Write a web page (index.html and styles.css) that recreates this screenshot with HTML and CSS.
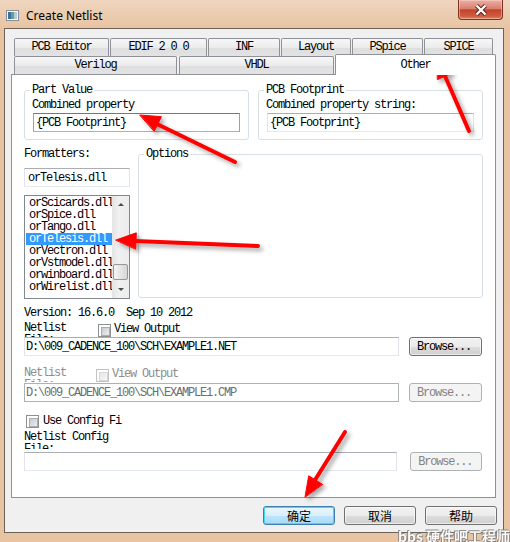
FILE: index.html
```html
<!DOCTYPE html>
<html lang="zh">
<head>
	<meta charset="UTF-8">
	<title>Create Netlist</title>
	<link rel="stylesheet" href="styles.css">
</head>
<body>
	<div class="window">
		<div class="titlebar">
			<svg class="app-icon" width="13" height="11" viewBox="0 0 13 11">
				<rect x="0.5" y="0.5" width="12" height="10" fill="#f4f6f8" stroke="#8c9096"/>
				<rect x="2" y="2" width="3" height="7" fill="#3f6f9e"/>
				<rect x="5" y="2" width="3" height="7" fill="#5aa58c"/>
				<rect x="8" y="2" width="3" height="7" fill="#b9cad8"/>
			</svg>
			<span class="title">Create Netlist</span>
			<div class="close">
				<svg width="14" height="12" viewBox="0 0 14 12">
					<path d="M2.5 1.5 L11.5 10.5 M11.5 1.5 L2.5 10.5" stroke="#5a2016" stroke-width="4.2"/>
					<path d="M2.5 1.5 L11.5 10.5 M11.5 1.5 L2.5 10.5" stroke="#fff" stroke-width="2.4"/>
				</svg>
			</div>
		</div>

		<div class="client">
			<div class="tabs">
				<div class="tab-row">
					<div class="tab w95">PCB Editor</div>
					<div class="tab w97">EDIF 2 0 0</div>
					<div class="tab w72">INF</div>
					<div class="tab w70">Layout</div>
					<div class="tab w71">PSpice</div>
					<div class="tab w69">SPICE</div>
				</div>
				<div class="tab-row">
					<div class="tab w163">Verilog</div>
					<div class="tab w155">VHDL</div>
					<div class="tab w161 selected">Other</div>
				</div>
			</div>

			<div class="panel">
				<div class="top-row">
					<fieldset class="group">
						<legend>Part Value</legend>
						<div class="label">Combined property</div>
						<input class="edit focus" type="text" value="{PCB Footprint}">
					</fieldset>
					<fieldset class="group">
						<legend>PCB Footprint</legend>
						<div class="label">Combined property string:</div>
						<input class="edit" type="text" value="{PCB Footprint}">
					</fieldset>
				</div>

				<div class="mid-row">
					<div class="formatters">
						<div class="label">Formatters:</div>
						<input class="edit small" type="text" value="orTelesis.dll">
						<div class="listbox">
							<ul class="items">
								<li>orScicards.dll</li>
								<li>orSpice.dll</li>
								<li>orTango.dll</li>
								<li class="sel">orTelesis.dll</li>
								<li>orVectron.dll</li>
								<li>orVstmodel.dll</li>
								<li>orwinboard.dll</li>
								<li>orWirelist.dll</li>
							</ul>
							<div class="scrollbar">
								<div class="sb-btn up"></div>
								<div class="sb-track"><div class="sb-thumb"></div></div>
								<div class="sb-btn down"></div>
							</div>
						</div>
					</div>
					<fieldset class="group options">
						<legend>Options</legend>
					</fieldset>
				</div>

				<div class="version">Version: 16.6.0  Sep 10 2012</div>

				<div class="file-head">
					<div class="file-label w74">Netlist<br>File:</div>
					<span class="check"></span>
					<span class="check-text">View Output</span>
				</div>
				<div class="file-row">
					<input class="edit path" type="text" value="D:\009_CADENCE_100\SCH\EXAMPLE1.NET">
					<button class="btn browse">Browse...</button>
				</div>

				<div class="file-head disabled second">
					<div class="file-label w72">Netlist<br>File:</div>
					<span class="check"></span>
					<span class="check-text">View Output</span>
				</div>
				<div class="file-row second">
					<input class="edit path" type="text" value="D:\009_CADENCE_100\SCH\EXAMPLE1.CMP" disabled>
					<button class="btn browse" disabled>Browse...</button>
				</div>

				<div class="config-check">
					<span class="check"></span>
					<span class="check-text">Use Config Fi</span>
				</div>
				<div class="config-label">Netlist Config<br>File:</div>
				<div class="file-row">
					<input class="edit path" type="text" value="">
					<button class="btn browse far" disabled>Browse...</button>
				</div>
			</div>

			<div class="buttons">
				<button class="btn cjk default">确定</button>
				<button class="btn cjk">取消</button>
				<button class="btn cjk">帮助</button>
			</div>
		</div>

		<div class="watermark">bbs 硬件吧工程师</div>

		<svg class="arrows" width="510" height="542" viewBox="0 0 510 542">
			<defs>
				<filter id="shadow" x="-20%" y="-20%" width="140%" height="140%">
					<feDropShadow dx="3" dy="3" stdDeviation="2" flood-color="#000" flood-opacity="0.35"/>
				</filter>
			</defs>
			<g filter="url(#shadow)" fill="#ff0000" stroke="#ff0000" stroke-linecap="round">
				<line x1="235" y1="162" x2="157" y2="124" stroke-width="4"/>
				<polygon points="140,115 161.4,116.7 154.4,131.1" stroke-width="1"/>
				<line x1="469" y1="131" x2="445" y2="76" stroke-width="4"/>
				<polygon points="437,58 452.3,73.1 437.7,79.5" stroke-width="1"/>
				<line x1="258" y1="246" x2="135" y2="241" stroke-width="4"/>
				<polygon points="116,240 136.3,232.8 135.7,248.8" stroke-width="1"/>
				<line x1="345" y1="432" x2="315" y2="480" stroke-width="4"/>
				<polygon points="305,497 308.7,475.8 322.3,484.2" stroke-width="1"/>
			</g>
		</svg>
	</div>
</body>
</html>
```

FILE: styles.css
```css
*{margin:0;padding:0;box-sizing:border-box;}
body{
	background:#e8c5a4;
	overflow:hidden;
	font-family:"Liberation Mono",monospace;
	font-size:12px;
	letter-spacing:-1.2px;
	color:#000;
}
.window{
	position:relative;
	width:510px;
	height:542px;
	padding:0 6px 9px 4px;
	display:flex;
	flex-direction:column;
	background:linear-gradient(#efd6bf,#e7c3a1 30px,#e8c4a3);
}

/* title bar */
.titlebar{
	height:28px;
	display:flex;
	align-items:center;
	flex:none;
}
.app-icon{margin-left:2px;margin-top:2px;}
.title{
	margin-left:7px;
	margin-top:2px;
	font-family:"Noto Sans","Open Sans",sans-serif;
	font-size:12px;
	letter-spacing:0;
	color:#000;
	flex:1;
}
.close{
	align-self:flex-start;
	margin-right:1px;
	width:45px;
	height:20px;
	display:flex;
	align-items:center;
	justify-content:center;
	border:1px solid #7d3225;
	border-top:none;
	border-radius:0 0 4px 4px;
	background:linear-gradient(#eab0a4,#d9806f 45%,#c2442c 52%,#cf5c3f 85%,#de8a6a);
	box-shadow:inset 0 0 0 1px rgba(255,220,210,.45);
}

/* client area */
.client{
	flex:1;
	border:1px solid #6c625a;
	background:#f0f0f0;
	display:flex;
	flex-direction:column;
}
.tabs{
	padding:9px 0 0 9px;
}
.tab-row{
	display:flex;
	height:18px;
}
.tab{
	height:18px;
	margin-right:1px;
	border:1px solid #8e9197;
	border-bottom:none;
	border-radius:2px 2px 0 0;
	background:linear-gradient(#f7f7f7,#ebebeb 50%,#dedede 52%,#e3e3e3);
	text-align:center;
	line-height:16px;
	white-space:pre;
}
.w95{width:95px;}
.w97{width:97px;}
.w72{width:72px;}
.w70{width:70px;}
.w71{width:71px;}
.w69{width:69px;}
.w163{width:163px;margin-right:2px;}
.w155{width:155px;}
.w161{width:161px;}
.tab.selected{
	position:relative;
	z-index:2;
	height:21px;
	margin-top:-2px;
	background:#fff;
	line-height:20px;
}

.panel{
	margin-left:6px;
	width:485px;
	height:424px;
	border:1px solid #8e9197;
	background:#fff;
	padding:9px 0 0 12px;
}
.label{
	line-height:12px;
	height:12px;
	white-space:pre;
}

/* group boxes */
.group{
	border:1px solid #d5dfe5;
	border-radius:3px;
	min-width:0;
}
.group legend{
	line-height:12px;
	padding:0 2px;
	margin-left:-3px;
}
.top-row{
	display:flex;
	gap:9px;
	width:459px;
}
.top-row .group{
	width:225px;
	padding:3px 8px 7px;
}
.top-row .label{margin-left:-1px;}

/* text boxes */
.edit{
	display:block;
	width:100%;
	height:19px;
	margin-top:2px;
	padding:0 2px;
	font:inherit;
	letter-spacing:-1.2px;
	color:#000;
	background:#fff;
	border:1px solid;
	border-color:#abadb3 #e2e3ea #e3e9ef;
	outline:none;
}
.edit.focus{border-color:#5e7d9a #8ea4b9 #9fb4c6;}
.edit:disabled{
	color:#6d6d6d;
	border-color:#adb2b5;
	background:#fff;
}

.mid-row{
	display:flex;
	gap:8px;
	margin-top:8px;
	width:459px;
}
.formatters{width:106px;}
.edit.small{margin-top:8px;padding-left:3px;}
.options{
	flex:1;
	height:150px;
	padding:0 8px;
}

/* list box */
.listbox{
	margin-top:8px;
	height:104px;
	border:1px solid #828790;
	background:#fff;
	display:flex;
}
.items{
	list-style:none;
	flex:1;
	overflow:hidden;
	padding:1px 0 0 1px;
}
.items li{
	height:12px;
	line-height:12px;
	padding-left:3px;
	white-space:pre;
}
.items li.sel{
	background:#3399ff;
	color:#fff;
}
.scrollbar{
	width:17px;
	display:flex;
	flex-direction:column;
	background:linear-gradient(90deg,#e4e4e4,#f0f0f0 40%,#ececec);
}
.sb-btn{
	height:17px;
	display:flex;
	align-items:center;
	justify-content:center;
}
.sb-btn::before{
	content:"";
	border-left:3px solid transparent;
	border-right:3px solid transparent;
}
.sb-btn.up::before{border-bottom:3px solid #4d4d4d;}
.sb-btn.down::before{border-top:3px solid #4d4d4d;}
.sb-track{
	flex:1;
	display:flex;
	flex-direction:column;
	justify-content:flex-end;
	padding:0 1px 1px;
}
.sb-thumb{
	height:16px;
	border:1px solid #979797;
	border-radius:2px;
	background:linear-gradient(90deg,#f4f4f4,#e6e6e6 50%,#d6d6d6);
}

.version{
	margin-top:8px;
	line-height:12px;
	white-space:pre;
}

/* file rows */
.file-head{
	display:flex;
	align-items:flex-start;
	height:16px;
	margin-top:2px;
}
.file-head.second{margin-top:10px;}
.file-label{
	height:16px;
	line-height:12px;
	padding-top:1px;
	overflow:hidden;
}
.file-label.w74{width:74px;}
.file-label.w72{width:72px;}
.check{
	width:13px;
	height:13px;
	margin-top:3px;
	border:1px solid #8e8f8f;
	background:#fff;
	padding:2px;
	flex:none;
}
.check::before{
	content:"";
	display:block;
	width:7px;
	height:7px;
	border:1px solid #a9adb2;
	background:linear-gradient(135deg,#c7cbd0,#eceef0);
}
.check-text{
	margin-left:3px;
	margin-top:2px;
	line-height:12px;
}
.disabled{color:#8d8d8d;}
.disabled .check{border-color:#c2c2c2;}
.disabled .check::before{border-color:#d8d8d8;background:linear-gradient(135deg,#e6e6e6,#f6f6f6);}

.file-row{
	display:flex;
	align-items:flex-start;
	width:458px;
}
.file-row.second{margin-top:1px;}
.edit.path{
	width:375px;
	margin-top:0;
	padding-left:1px;
}

/* buttons */
.btn{
	font:inherit;
	letter-spacing:-1.2px;
	color:#000;
	height:19px;
	border:1px solid #707070;
	border-radius:3px;
	background:linear-gradient(#f2f2f2,#ebebeb 50%,#dddddd 51%,#cfcfcf);
	box-shadow:inset 0 0 0 1px rgba(255,255,255,.6);
}
.btn.browse{
	width:73px;
	margin-left:10px;
	text-align:left;
	padding-left:7px;
}
.btn.browse.far{margin-left:13px;width:72px;}
.btn:disabled{
	color:#838383;
	border-color:#adb2b5;
	background:#f4f4f4;
	box-shadow:none;
}

.config-check{
	display:flex;
	margin-top:13px;
	margin-left:2px;
	height:13px;
}
.config-check .check{margin-top:0;}
.config-check .check-text{margin-top:0;margin-left:4px;}
.config-label{
	margin-top:2px;
	height:19px;
	margin-bottom:3px;
	line-height:12px;
	padding-top:1px;
	overflow:hidden;
}

.buttons{
	display:flex;
	justify-content:flex-end;
	gap:9px;
	margin-top:8px;
	padding-right:6px;
}
.btn.cjk{
	width:72px;
	font-family:"Noto Sans CJK SC",sans-serif;
	font-size:12px;
	letter-spacing:0;
	line-height:15px;
}
.btn.default{
	border-color:#3c7fb1;
	background:linear-gradient(#eaf6fd,#d9f0fc 50%,#bee6fd 51%,#a7d9f5);
	box-shadow:inset 0 0 0 1px #48d7fb;
}

/* overlays */
.watermark{
	position:absolute;
	right:0;
	bottom:-4px;
	font-family:"Noto Sans CJK SC",sans-serif;
	font-size:14px;
	font-weight:bold;
	letter-spacing:0;
	color:#ffffff;
	text-shadow:0 0 1px #666,1px 1px 0 #888,-1px -1px 0 #888;
	opacity:.9;
}
.arrows{
	position:absolute;
	left:0;
	top:0;
	pointer-events:none;
}
```
